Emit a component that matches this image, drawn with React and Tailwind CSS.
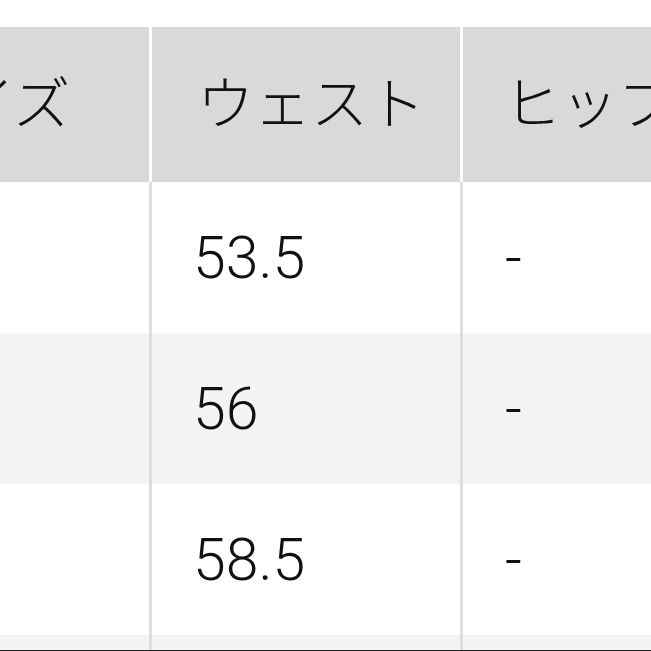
import React from 'react';

const rows = [
  { size: 'S', waist: '53.5', hip: '-', bg: 'bg-white' },
  { size: 'M', waist: '56', hip: '-', bg: 'bg-[#f4f4f4]' },
  { size: 'L', waist: '58.5', hip: '-', bg: 'bg-white' },
];

const font = { fontFamily: '"Liberation Sans", "Noto Sans CJK JP", sans-serif' };

const App = () => {
  return (
    <div className="w-[651px] h-[651px] overflow-hidden bg-white flex flex-col text-[#111]" style={font}>
      <div className="h-[27px] shrink-0" />

      {/* Header */}
      <div className="flex h-[155px] shrink-0 bg-[#d9d9d9] ml-[-139px] text-[57px] leading-none font-light">
        <div className="w-[288px] shrink-0 flex items-center pl-[40px] whitespace-nowrap">サイズ</div>
        <div className="w-[311px] shrink-0 flex items-center pl-[45px] border-l-[3px] border-white whitespace-nowrap">ウェスト</div>
        <div className="w-[400px] shrink-0 flex items-center pl-[41px] border-l-[3px] border-white whitespace-nowrap">ヒップ</div>
      </div>

      {/* Body */}
      {rows.map((r) => (
        <div
          key={r.size}
          className={`flex h-[151px] shrink-0 ml-[-139px] text-[59px] leading-none font-light font-['Roboto',sans-serif] ${r.bg}`}
        >
          <div className="w-[288px] shrink-0 flex items-center pl-[40px]">{r.size}</div>
          <div className="w-[311px] shrink-0 flex items-center pl-[41px] border-l-[3px] border-[#dedede]">{r.waist}</div>
          <div className="w-[400px] shrink-0 flex items-center pl-[42px] border-l-[3px] border-[#dedede]">{r.hip}</div>
        </div>
      ))}

      <div className="flex h-[15px] shrink-0 ml-[-139px] bg-[#f4f4f4]">
        <div className="w-[288px] shrink-0" />
        <div className="w-[311px] shrink-0 border-l-[3px] border-[#dedede]" />
        <div className="w-[400px] shrink-0 border-l-[3px] border-[#dedede]" />
      </div>
      <div className="h-[1px] shrink-0 bg-[#222]" />
    </div>
  );
};

export default App;
